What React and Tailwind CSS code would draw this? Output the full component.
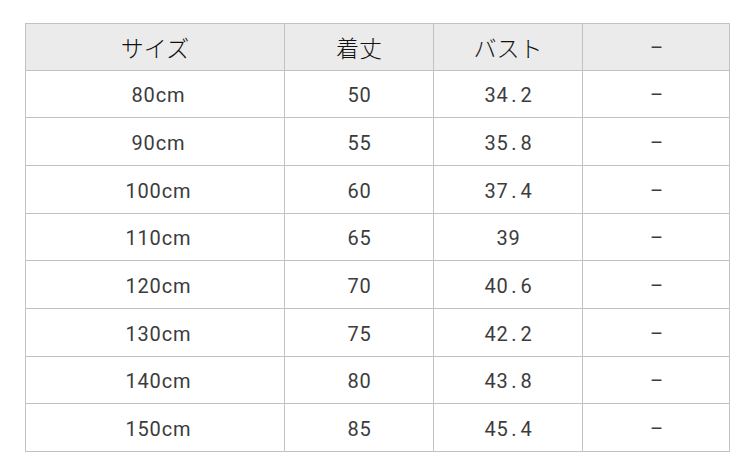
import React from "react";

const rows = [
  ["80cm", "50", "34.2", "-"],
  ["90cm", "55", "35.8", "-"],
  ["100cm", "60", "37.4", "-"],
  ["110cm", "65", "39", "-"],
  ["120cm", "70", "40.6", "-"],
  ["130cm", "75", "42.2", "-"],
  ["140cm", "80", "43.8", "-"],
  ["150cm", "85", "45.4", "-"],
];

// row heights measured off the picture (incl. bottom line)
const heights = ["h-[47px]", "h-[47px]", "h-[48px]", "h-[48px]", "h-[47px]", "h-[48px]", "h-[48px]", "h-[47px]", "h-[48px]"];

// half-width cells, like the gothic font of the original
function Mono({ text }) {
  return (
    <span className="flex">
      {text.split("").map((ch, i) => (
        <span key={i} className="inline-block w-[12px] text-center">
          {ch === "-" ? "–" : ch}
        </span>
      ))}
    </span>
  );
}

function Row({ cells, h, head }) {
  return (
    <div className={`grid grid-cols-[259px_149px_149px_147px] ${h} ${head ? "bg-[#ebebeb]" : "bg-white"}`}>
      {cells.map((c, i) => (
        <div
          key={i}
          className={`flex items-center justify-center border-r border-b border-[#c2c2c2] ${
            head && i < 3
              ? "text-[23px] text-[#111] font-['Noto_Sans_CJK_JP',sans-serif] font-light"
              : "pt-[2px] text-[20px] text-[#3c3c3c] font-['Roboto',sans-serif]"
          }`}
        >
          {head && i < 3 ? c : <Mono text={c} />}
        </div>
      ))}
    </div>
  );
}

export default function App() {
  return (
    <div className="w-[750px] h-[473px] bg-white pt-[23px] pl-[25px]">
      <div className="w-[705px] border-t border-l border-[#c2c2c2]">
        <Row head cells={["サイズ", "着丈", "バスト", "-"]} h={heights[0]} />
        {rows.map((r, i) => (
          <Row key={i} cells={r} h={heights[i + 1]} />
        ))}
      </div>
    </div>
  );
}
